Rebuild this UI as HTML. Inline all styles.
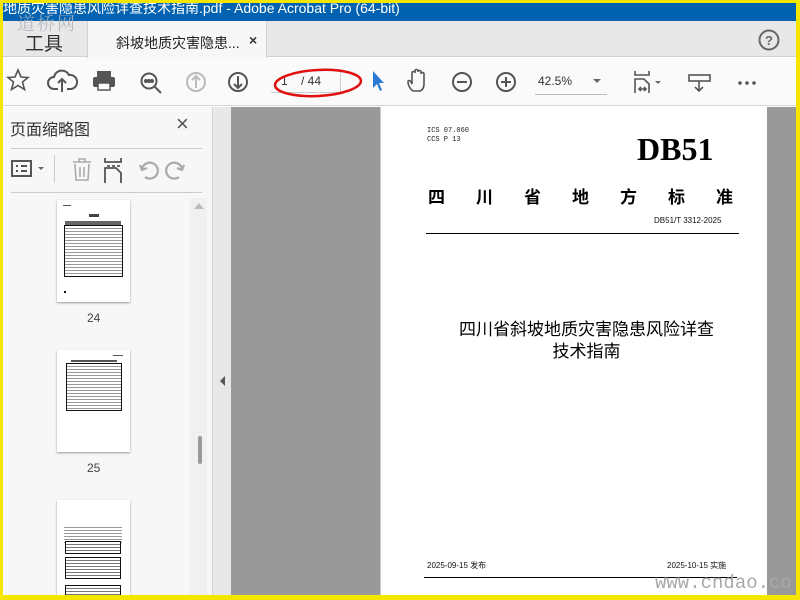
<!DOCTYPE html>
<html><head><meta charset="utf-8"><style>
*{margin:0;padding:0;box-sizing:border-box}
body{width:800px;height:600px;overflow:hidden;background:#f5e600;position:relative;font-family:"Liberation Sans","Noto Sans CJK SC",sans-serif}
.a{position:absolute}
</style></head><body>
<div class="a" style="left:3px;top:3px;width:793px;height:592px;background:#fff;overflow:hidden">
<!-- title bar -->
<div class="a" style="left:0;top:0;width:793px;height:18px;background:#0062b0;color:#fff;font-size:14px;line-height:10px;white-space:nowrap;overflow:hidden">地质灾害隐患风险详查技术指南.pdf - Adobe Acrobat Pro (64-bit)</div>
<!-- tab bar -->
<div class="a" style="left:0;top:18px;width:793px;height:36px;background:#e8e8e8;border-bottom:1px solid #cfcfcf"></div>
<div class="a" style="left:22px;top:26px;font-size:19px;color:#333">工具</div>
<div class="a" style="left:84px;top:18px;width:180px;height:37px;background:#f7f7f7;border-left:1px solid #d0d0d0;border-right:1px solid #d0d0d0"></div>
<div class="a" style="left:113px;top:30px;font-size:14px;color:#222">斜坡地质灾害隐患...</div>
<div class="a" style="left:246px;top:29px;font-size:14px;color:#333;font-weight:bold">×</div>
<div class="a" style="left:14px;top:7px;font-size:18px;color:#b0b4bc;letter-spacing:2px;font-family:'Noto Serif CJK SC',serif;opacity:.85">道桥网</div>
<svg class="a" style="left:755px;top:26px" width="22" height="22"><circle cx="11" cy="11" r="9.5" fill="none" stroke="#666" stroke-width="2"/><text x="11" y="16" text-anchor="middle" font-size="13" font-weight="bold" fill="#666" font-family="Liberation Sans">?</text></svg>
<!-- toolbar -->
<div class="a" style="left:0;top:55px;width:793px;height:48px;background:#fafafa;border-bottom:1px solid #d4d4d4"></div>
<svg class="a" style="left:0;top:62px" width="793" height="36" fill="none" stroke="#555" stroke-width="2">
<path d="M15 5l3 7 7 .5-5.5 4.5 2 7.5-6.5-4-6.5 4 2-7.5L5 12.5l7-.5z" stroke-width="1.6"/>
<path d="M55 24h-4a6 6 0 0 1 0-12 8 8 0 0 1 15-2 6 6 0 0 1 2 14h-4M59 27V14m-4 4l4-4 4 4"/>
<rect x="94" y="6" width="14" height="6" fill="#555" stroke="none"/><rect x="90" y="12" width="22" height="10" rx="2" fill="#555" stroke="none"/><rect x="95" y="18" width="12" height="7" fill="#fff" stroke="#555" stroke-width="1.5"/>
<circle cx="146" cy="16" r="7.5"/><path d="M152 22l6 6"/><circle cx="143" cy="16" r="1" fill="#555"/><circle cx="146" cy="16" r="1" fill="#555"/><circle cx="149" cy="16" r="1" fill="#555"/>
<circle cx="193" cy="17" r="9" stroke="#bbb"/><path d="M193 23V11m-4 4l4-4 4 4" stroke="#bbb"/>
<circle cx="235" cy="17" r="9"/><path d="M235 11v12m-4-4l4 4 4-4"/>
<path d="M370 6v17l4-4 3 7 2-1-3-7h5z" fill="#2a7ad5" stroke="none"/>
<path d="M410 26c-3-2-5-6-5-9 0-2 2-2 3 0l1 2V8c0-2 3-2 3 0V6c0-2 3-2 3 0v1c0-2 3-2 3 0v2c0-2 3-2 3 0v10c0 4-2 7-5 7z" stroke-width="1.6"/>
<circle cx="459" cy="17" r="9"/><path d="M454 17h10"/>
<circle cx="503" cy="17" r="9"/><path d="M498 17h10M503 12v10"/>
<path d="M632 6v4h14V6M632 28V14h9l5 5v9M636 24h7m-5-2l-2 2 2 2m3-4l2 2-2 2" stroke-width="1.6"/>
<path d="M652 16l3 3 3-3z" fill="#666" stroke="none"/>
<rect x="686" y="10" width="21" height="6" stroke-width="1.6"/><path d="M696 16v10m-4-4l4 4 4-4" stroke-width="1.6"/>
<circle cx="737" cy="18" r="1.8" fill="#555" stroke="none"/><circle cx="744" cy="18" r="1.8" fill="#555" stroke="none"/><circle cx="751" cy="18" r="1.8" fill="#555" stroke="none"/>
</svg>
<div class="a" style="left:268px;top:66px;width:70px;height:24px;border-right:1px solid #ccc;border-bottom:1px solid #ccc"></div>
<div class="a" style="left:278px;top:71px;font-size:12px;color:#333">1&nbsp;&nbsp;&nbsp;&nbsp;/ 44</div>
<svg class="a" style="left:265px;top:60px" width="100" height="40"><ellipse cx="50" cy="20" rx="43" ry="13" fill="none" stroke="#e01010" stroke-width="2.5" transform="rotate(-3 50 20)"/></svg>
<div class="a" style="left:535px;top:71px;font-size:12px;color:#333">42.5%</div>
<div class="a" style="left:532px;top:91px;width:72px;height:1px;background:#bbb"></div>
<svg class="a" style="left:590px;top:76px" width="10" height="6"><path d="M0 0h8l-4 4z" fill="#666"/></svg>
<!-- left panel -->
<div class="a" style="left:0;top:104px;width:209px;height:490px;background:#f7f7f7"></div>
<div class="a" style="left:7px;top:113px;font-size:16px;color:#333">页面缩略图</div>
<div class="a" style="left:173px;top:108px;font-size:22px;color:#555">×</div>
<div class="a" style="left:8px;top:145px;width:191px;height:1px;background:#ccc"></div>
<div class="a" style="left:8px;top:189px;width:191px;height:1px;background:#ccc"></div>
<div class="a" style="left:51px;top:152px;width:1px;height:28px;background:#ccc"></div>
<svg class="a" style="left:0;top:150px" width="200" height="34" fill="none" stroke-width="2">
<rect x="9" y="8" width="19" height="15" stroke="#555"/><path d="M13 13h2m3 0h6m-11 5h2m3 0h6" stroke="#555"/><path d="M35 14h6l-3 3z" fill="#666" stroke="none"/>
<path d="M70 9h18M76 9V6h6v3M72 11l1 16h12l1-16M77 14v10m4-10v10" stroke="#aaa" stroke-width="1.6"/>
<path d="M102 5v4h16V5M102 30V15h11l5 5v10M104 13h3m2 0h3m2 0h3" stroke="#555" stroke-width="1.8"/>
<path d="M142 24a8 8 0 1 0-3-8M137 12l2 5 5-2" stroke="#aaa" stroke-width="2.2"/>
<path d="M176 24a8 8 0 1 1 3-8M181 12l-2 5-5-2" stroke="#aaa" stroke-width="2.2"/>
</svg>
<!-- scrollbar -->
<div class="a" style="left:187px;top:195px;width:17px;height:400px;background:#f0f0f0"></div>
<svg class="a" style="left:190px;top:198px" width="12" height="10"><path d="M1 8l5-6 5 6z" fill="#bbb"/></svg>
<div class="a" style="left:195px;top:433px;width:4px;height:28px;background:#999;border-radius:2px"></div>
<!-- thumbnails -->
<div class="a" style="left:54px;top:197px;width:73px;height:102px;background:#fff;box-shadow:0 1px 2px #999">
<div class="a" style="left:6px;top:5px;width:8px;height:1px;background:#555"></div>
<div class="a" style="left:32px;top:14px;width:10px;height:3px;background:#444"></div>
<div class="a" style="left:8px;top:21px;width:56px;height:4px;background:#666"></div>
<div class="a" style="left:7px;top:25px;width:59px;height:52px;border:1px solid #111;background:repeating-linear-gradient(#fff 0 2px,#999 2px 3px)"></div>
<div class="a" style="left:7px;top:91px;width:2px;height:2px;background:#111"></div>
</div>
<div class="a" style="left:84px;top:308px;font-size:12px;color:#444">24</div>
<div class="a" style="left:54px;top:347px;width:73px;height:102px;background:#fff;box-shadow:0 1px 2px #999">
<div class="a" style="left:56px;top:5px;width:10px;height:1px;background:#555"></div>
<div class="a" style="left:14px;top:10px;width:46px;height:2px;background:#555"></div>
<div class="a" style="left:9px;top:13px;width:56px;height:48px;border:1px solid #111;background:repeating-linear-gradient(#fff 0 2px,#999 2px 3px)"></div>
</div>
<div class="a" style="left:84px;top:458px;font-size:12px;color:#444">25</div>
<div class="a" style="left:54px;top:497px;width:73px;height:100px;background:#fff;box-shadow:0 1px 2px #999">
<div class="a" style="left:7px;top:25px;width:58px;height:20px;background:repeating-linear-gradient(#fff 0 2px,#999 2px 3px)"></div>
<div class="a" style="left:8px;top:41px;width:56px;height:13px;border:1px solid #111;background:repeating-linear-gradient(#fff 0 2px,#777 2px 3px)"></div>
<div class="a" style="left:8px;top:57px;width:56px;height:22px;border:1px solid #111;background:repeating-linear-gradient(#fff 0 2px,#777 2px 3px)"></div>
<div class="a" style="left:8px;top:85px;width:56px;height:14px;border:1px solid #111;background:repeating-linear-gradient(#fff 0 2px,#777 2px 3px)"></div>
</div>
<!-- splitter -->
<div class="a" style="left:209px;top:104px;width:19px;height:490px;background:#e8e8e8;border-left:1px solid #d4d4d4"></div>
<svg class="a" style="left:216px;top:372px" width="8" height="12"><path d="M6 1L1 6l5 5z" fill="#555"/></svg>
<!-- doc area -->
<div class="a" style="left:228px;top:104px;width:565px;height:490px;background:#999"></div>
<div class="a" style="left:377px;top:104px;width:387px;height:490px;background:#fff;border-left:1px solid #ccc"></div>
<div class="a" style="left:424px;top:124px;font-size:7px;line-height:9px;color:#222;font-family:'Liberation Mono',monospace">ICS 07.060<br>CCS P 13</div>
<div class="a" style="left:634px;top:127px;font-size:32px;font-weight:bold;color:#000;font-family:'Liberation Serif',serif;line-height:38px">DB51</div>
<div class="a" style="left:425px;top:180px;font-size:17px;color:#000;font-weight:bold;letter-spacing:31px;white-space:nowrap">四川省地方标准</div>
<div class="a" style="left:651px;top:213px;font-size:8px;color:#111">DB51/T 3312-2025</div>
<div class="a" style="left:423px;top:230px;width:313px;height:1px;background:#000"></div>
<div class="a" style="left:410px;top:316px;width:347px;text-align:center;font-size:17px;line-height:22px;color:#000">四川省斜坡地质灾害隐患风险详查<br>技术指南</div>
<div class="a" style="left:424px;top:557px;font-size:8px;color:#111">2025-09-15 发布</div>
<div class="a" style="left:664px;top:557px;font-size:8px;color:#111">2025-10-15 实施</div>
<div class="a" style="left:421px;top:574px;width:313px;height:1px;background:#000"></div>
<div class="a" style="left:652px;top:569px;font-size:19px;color:#a9a9a9;font-family:'Liberation Mono',monospace;white-space:nowrap">www.cndao.co</div>
</div>
</body></html>
